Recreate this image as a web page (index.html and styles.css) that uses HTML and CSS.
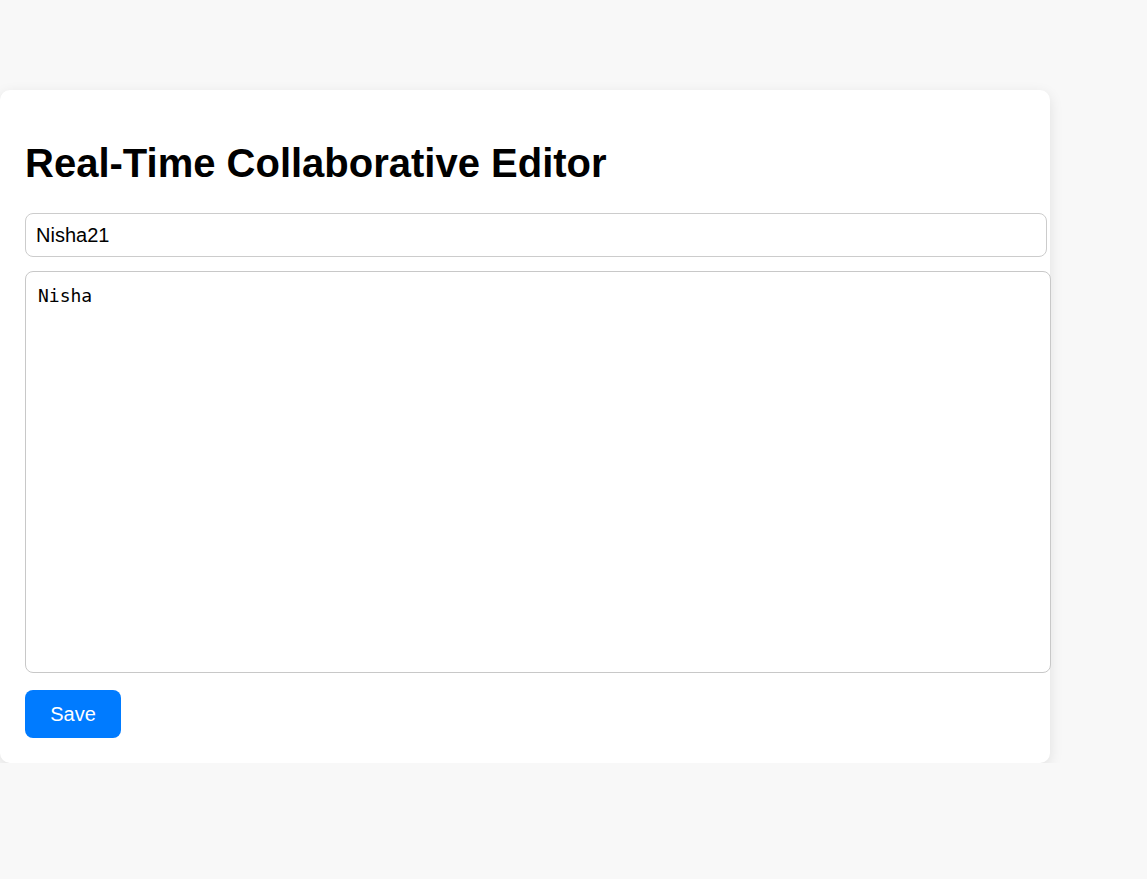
FILE: index.html
```html
<!DOCTYPE html>
<html>
<head>
<meta charset="utf-8">
<title>Real-Time Collaborative Editor</title>
<link rel="stylesheet" href="styles.css">
</head>
<body>
<div class="page">
  <div class="card">
    <h1 class="title">Real-Time Collaborative Editor</h1>
    <input class="name-input" type="text" value="Nisha21">
    <textarea class="editor">Nisha</textarea>
    <button class="save-btn">Save</button>
  </div>
</div>
</body>
</html>
```
FILE: styles.css
```css
html, body {
  margin: 0;
  padding: 0;
  background: #f8f8f8;
  font-family: "Liberation Sans", Arial, sans-serif;
}
.page {
  padding-top: 90px;
}
.card {
  width: 1000px;
  padding: 25px;
  background: #ffffff;
  border-radius: 10px;
  box-shadow: 0 4px 14px rgba(0, 0, 0, 0.1);
  display: flex;
  flex-direction: column;
  align-items: flex-start;
}
.title {
  margin: 25px 0 27px 0;
  font-size: 40px;
  line-height: 46px;
  font-weight: bold;
  color: #000;
}
.name-input {
  width: 1000px;
  padding: 10px 10px 10px 10px;
  margin: 0 0 14px 0;
  border: 1px solid #cccccc;
  border-radius: 8px;
  font-family: "Liberation Sans", Arial, sans-serif;
  font-size: 20px;
  line-height: 22px;
  height: 22px;
  color: #000;
  outline: none;
}
.editor {
  width: 1000px;
  height: 375px;
  padding: 13px 12px 12px 12px;
  margin: 0 0 17px 0;
  border: 1px solid #c8c8c8;
  border-radius: 8px;
  font-family: "DejaVu Sans Mono", monospace;
  font-size: 18px;
  line-height: 21px;
  color: #000;
  resize: none;
  outline: none;
}
.save-btn {
  width: 96px;
  height: 48px;
  padding: 0;
  border: none;
  border-radius: 8px;
  background: #007bff;
  color: #ffffff;
  font-family: "Liberation Sans", Arial, sans-serif;
  font-size: 20px;
  cursor: pointer;
}
```
